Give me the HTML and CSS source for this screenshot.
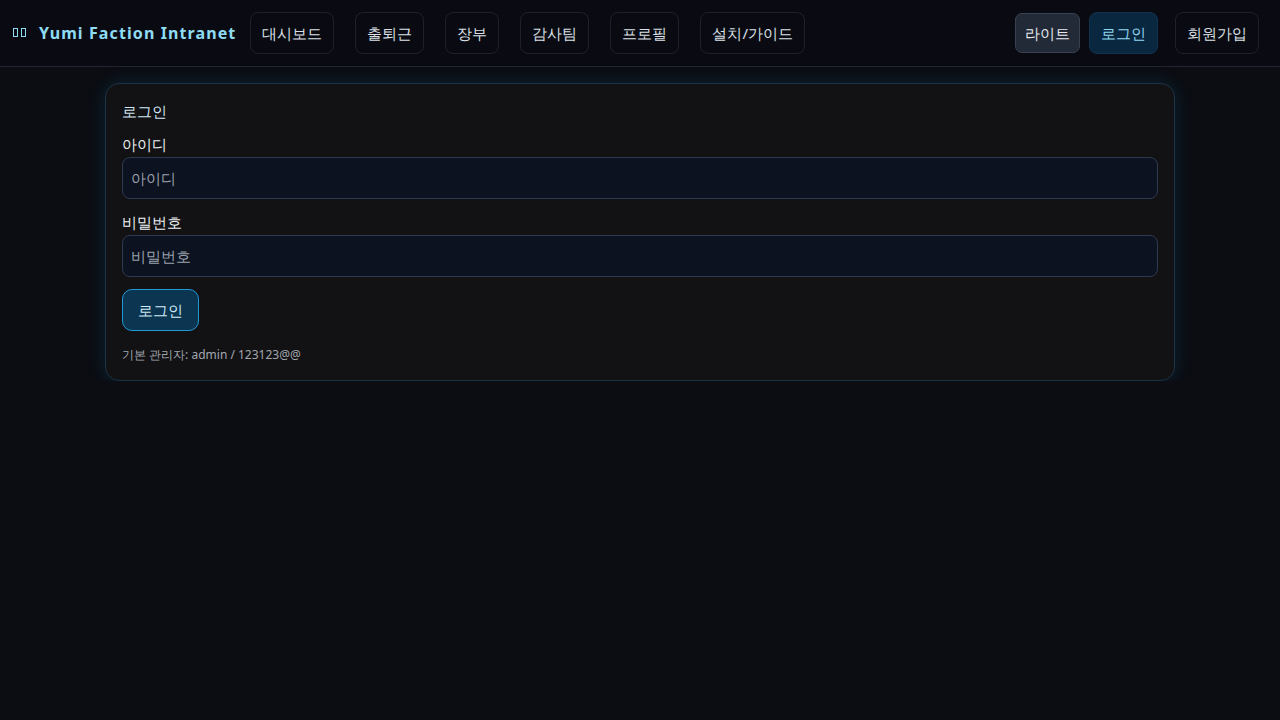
FILE: index.html
```html
<!DOCTYPE html>
<html lang="ko">
<head>
  <meta charset="UTF-8">
  <title>Yumi Faction Intranet</title>
  <link rel="stylesheet" href="styles.css">
</head>
<body>

  <header class="topbar">
    <div class="brand"><span class="tofu"></span><span class="tofu"></span><span>Yumi Faction Intranet</span></div>
    <nav class="nav">
      <a class="nav-btn" href="#">대시보드</a>
      <a class="nav-btn" href="#">출퇴근</a>
      <a class="nav-btn" href="#">장부</a>
      <a class="nav-btn" href="#">감사팀</a>
      <a class="nav-btn" href="#">프로필</a>
      <a class="nav-btn" href="#">설치/가이드</a>
    </nav>
    <div class="actions">
      <button class="theme-btn" type="button">라이트</button>
      <a class="nav-btn active" href="#">로그인</a>
      <a class="nav-btn signup" href="#">회원가입</a>
    </div>
  </header>

  <main class="container">
    <form class="card">
      <h2 class="card-title">로그인</h2>

      <div class="form-group">
        <label for="username">아이디</label>
        <input type="text" id="username" placeholder="아이디">
      </div>

      <div class="form-group">
        <label for="password">비밀번호</label>
        <input type="password" id="password" placeholder="비밀번호">
      </div>

      <button class="submit-btn" type="button">로그인</button>

      <p class="hint">기본 관리자: admin / 123123@@</p>
    </form>
  </main>

</body>
</html>
```

FILE: styles.css
```css
body {
  margin: 0;
  font-family: "Noto Sans", sans-serif;
  font-size: 15px;
  background-color: #0b0d12;
  color: #e6e8ee;
}

.topbar {
  display: flex;
  align-items: center;
  height: 67px;
  padding: 0 21px 0 13px;
  border-bottom: 1px solid #23252f;
  background-color: #0a0b12;
  box-sizing: border-box;
}

.brand {
  display: flex;
  align-items: center;
  margin-right: 14px;
  font-size: 16px;
  font-weight: 700;
  letter-spacing: 1.1px;
  color: #8fdcf2;
  white-space: nowrap;
}

.tofu {
  width: 3px;
  height: 7px;
  border: 1px solid #8fdcf2;
  margin: 0 3px 2px 0;
}

.tofu + .tofu {
  margin-right: 13px;
}

.nav {
  display: flex;
  gap: 21px;
}

.actions {
  display: flex;
  align-items: center;
  margin-left: auto;
  gap: 9px;
}

.nav-btn {
  display: inline-flex;
  align-items: center;
  height: 42px;
  padding: 0 11px;
  border: 1px solid #1e212b;
  border-radius: 8px;
  background-color: #0a0b12;
  color: #dde0e7;
  font-size: 15px;
  text-decoration: none;
  box-sizing: border-box;
}

.nav-btn.active {
  background-color: #0a2740;
  border-color: #0f3350;
  color: #8fd8f0;
}

.nav-btn.signup {
  margin-left: 8px;
}

.theme-btn {
  height: 40px;
  padding: 0 9px;
  border: 1px solid #394150;
  border-radius: 7px;
  background-color: #222a37;
  color: #e6e8ee;
  font-family: inherit;
  font-size: 15px;
  cursor: pointer;
}

.container {
  max-width: 1070px;
  margin: 16px auto 0;
}

.card {
  padding: 16px;
  border: 1px solid #1a3448;
  border-radius: 14px;
  background-color: #121215;
  box-shadow: 0 0 18px rgba(20, 110, 170, 0.22);
}

.card-title {
  margin: 0 0 11px;
  font-size: 15px;
  line-height: 22px;
  font-weight: 400;
  color: #d2e6f2;
}

.form-group {
  margin-bottom: 12px;
}

label {
  display: block;
  margin-bottom: 2px;
  font-size: 15px;
  line-height: 22px;
  color: #eef0f4;
}

input[type="text"],
input[type="password"] {
  display: block;
  width: 100%;
  height: 42px;
  padding: 0 8px;
  box-sizing: border-box;
  border: 1px solid #2b3a50;
  border-radius: 8px;
  background-color: #0c1220;
  color: #e6e8ee;
  font-family: inherit;
  font-size: 15px;
}

input::placeholder {
  color: #9aa1ac;
}

.submit-btn {
  display: block;
  height: 42px;
  padding: 0 15px;
  border: 1px solid #1e9ad8;
  border-radius: 10px;
  background-color: #0b3550;
  color: #cfeaf7;
  font-family: inherit;
  font-size: 15px;
  cursor: pointer;
}

.hint {
  margin: 15px 0 0;
  font-size: 12px;
  line-height: 18px;
  color: #a3a7af;
}
```
